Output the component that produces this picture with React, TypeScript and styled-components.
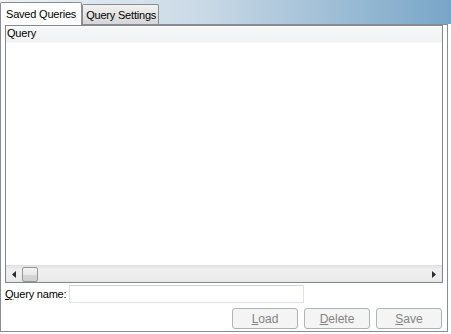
import React from 'react';
import styled, {createGlobalStyle} from 'styled-components';

const Global = createGlobalStyle`
  html, body {
    margin: 0;
    padding: 0;
    background: #ffffff;
  }
  body {
    font-family: "Liberation Sans", Arial, sans-serif;
    font-size: 11px;
    letter-spacing: -0.2px;
    color: #000;
  }
`;

const Page = styled.div`
  width: 451px;
  height: 334px;
  display: flex;
  flex-direction: column;
  background: #ffffff;
`;

const TabStrip = styled.div`
  height: 24px;
  display: flex;
  align-items: flex-end;
  background: linear-gradient(to right, #eef2f6 0%, #c9d9e6 45%, #78a5c7 100%);
`;

const Tab = styled.div<{ $active?: boolean }>`
  box-sizing: border-box;
  height: ${p => (p.$active ? '23px' : '20px')};
  padding: ${p => (p.$active ? '4px 5px 0 5px' : '3px 2px 0 3px')};
  border: 1px solid #898c95;
  border-bottom: none;
  border-radius: 2px 2px 0 0;
  background: ${p => (p.$active ? '#ffffff' : 'linear-gradient(#f2f2f2, #e3e3e3 50%, #d6d6d6)')};
  margin-bottom: ${p => (p.$active ? '-1px' : '0')};
  position: relative;
  z-index: ${p => (p.$active ? 1 : 0)};
  white-space: nowrap;
  line-height: 14px;
`;

const Panel = styled.div`
  box-sizing: border-box;
  width: 448px;
  height: 308px;
  border: 1px solid #898c95;
  display: flex;
  flex-direction: column;
  padding: 0 4px 1px 4px;
`;

const ListView = styled.div`
  box-sizing: border-box;
  height: 258px;
  border: 1px solid #828790;
  display: flex;
  flex-direction: column;
  background: #ffffff;
`;

const ListHeader = styled.div`
  height: 15px;
  padding: 1px 0 0 1px;
  background: linear-gradient(#ffffff 0px, #f5f6f7 2px, #f1f2f4 100%);
  border-bottom: 1px solid #f7f7f8;
  line-height: 13px;
`;

const ListBody = styled.div`
  flex: 1;
`;

const HScrollBar = styled.div`
  height: 16px;
  display: flex;
  align-items: center;
  background: linear-gradient(#e3e3e3, #efefef 20%, #ececec 80%, #e6e6e6);
  border-top: 1px solid #e0e0e0;
`;

const ScrollArrow = styled.div<{ $dir: 'left' | 'right' }>`
  width: 16px;
  height: 16px;
  display: flex;
  align-items: center;
  justify-content: center;
  margin-left: ${p => (p.$dir === 'right' ? 'auto' : '0')};
`;

const ScrollThumb = styled.div`
  box-sizing: border-box;
  width: 16px;
  height: 15px;
  border: 1px solid #979797;
  border-radius: 2px;
  background: linear-gradient(#f4f4f4, #e8e8e8 50%, #d6d6d6 51%, #cfcfcf);
`;

const FormRow = styled.div`
  display: flex;
  align-items: center;
  margin-top: 2px;
  height: 18px;
`;

const Label = styled.span`
  width: 64px;
`;

const TextInput = styled.input`
  box-sizing: border-box;
  width: 235px;
  height: 18px;
  border: 1px solid #dbe1e8;
  border-top-color: #cfd5dc;
  outline: none;
  font: inherit;
  padding: 0 2px;
`;

const ButtonRow = styled.div`
  display: flex;
  justify-content: flex-end;
  gap: 6px;
  margin-top: auto;
  padding-right: 1px;
  margin-bottom: 1px;
`;

const Button = styled.button`
  box-sizing: border-box;
  width: 66px;
  height: 21px;
  border: 1px solid #adb2b5;
  border-radius: 3px;
  background: #f4f4f4;
  color: #838383;
  font: inherit;
  font-size: 12px;
  padding: 0;
`;

const Arrow = ({dir}: { dir: 'left' | 'right' }) => (
    <svg width="4" height="7" viewBox="0 0 4 7">
        {dir === 'left'
            ? <path d="M4 0 L0 3.5 L4 7 Z" fill="#2b2b2b"/>
            : <path d="M0 0 L4 3.5 L0 7 Z" fill="#2b2b2b"/>}
    </svg>
);

export default function App() {
    return (
        <Page>
            <Global/>
            <TabStrip>
                <Tab $active>Saved Queries</Tab>
                <Tab>Query Settings</Tab>
            </TabStrip>
            <Panel>
                <ListView>
                    <ListHeader>Query</ListHeader>
                    <ListBody/>
                    <HScrollBar>
                        <ScrollArrow $dir="left"><Arrow dir="left"/></ScrollArrow>
                        <ScrollThumb/>
                        <ScrollArrow $dir="right"><Arrow dir="right"/></ScrollArrow>
                    </HScrollBar>
                </ListView>
                <FormRow>
                    <Label><u>Q</u>uery name:</Label>
                    <TextInput/>
                </FormRow>
                <ButtonRow>
                    <Button disabled><u>L</u>oad</Button>
                    <Button disabled><u>D</u>elete</Button>
                    <Button disabled><u>S</u>ave</Button>
                </ButtonRow>
            </Panel>
        </Page>
    );
}
